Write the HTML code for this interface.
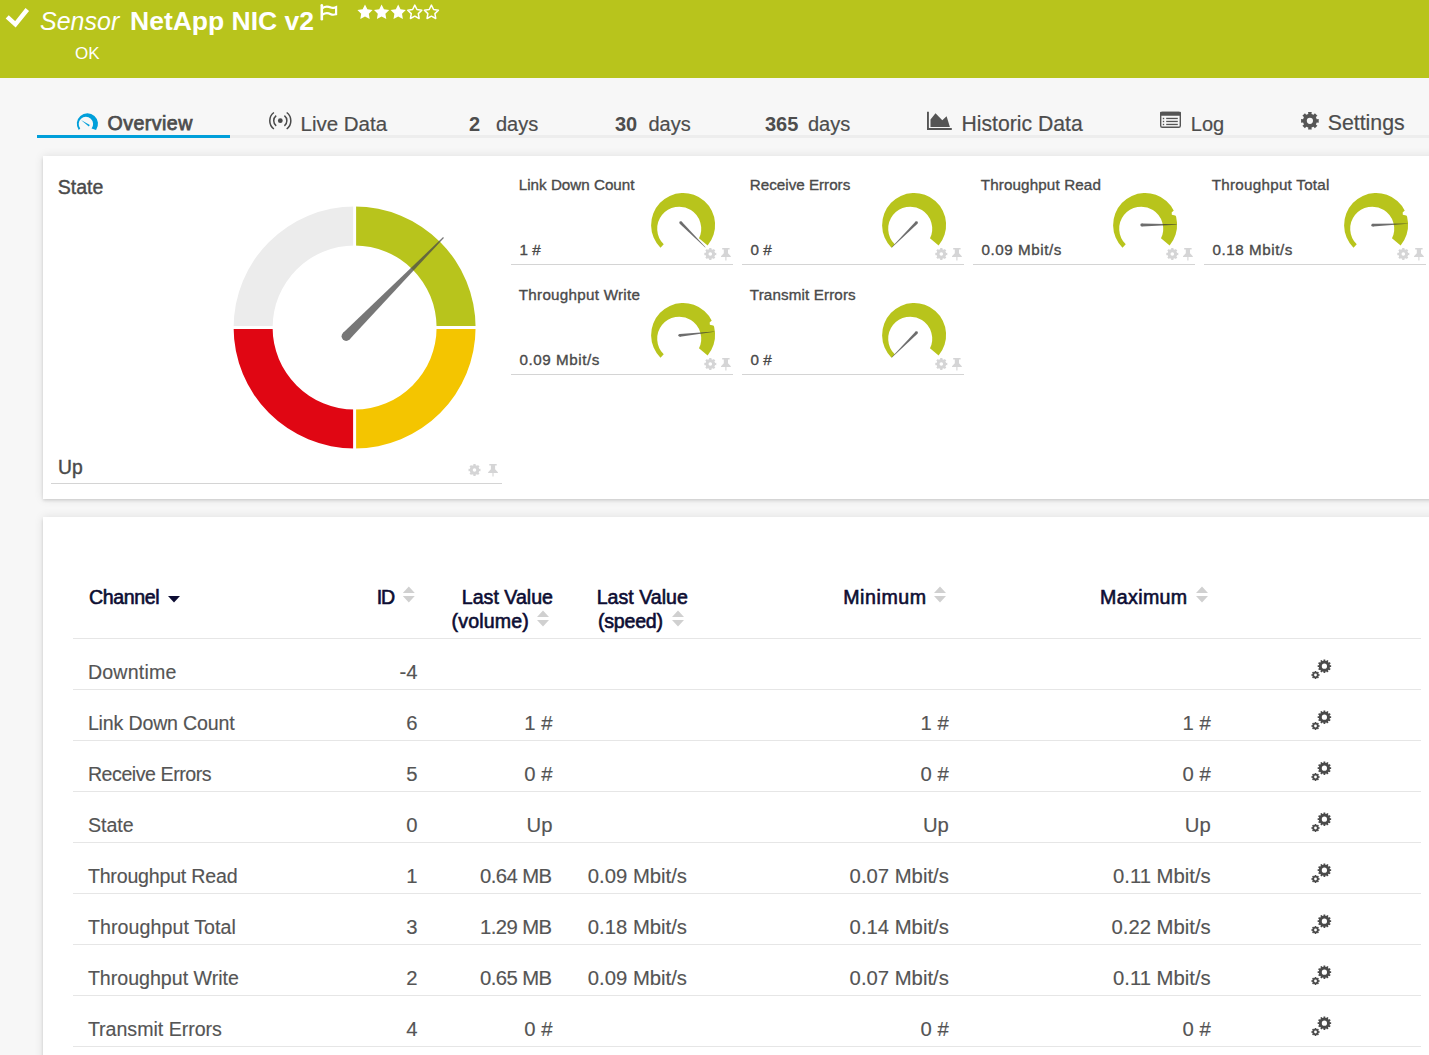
<!DOCTYPE html>
<html><head><meta charset="utf-8">
<style>
html,body{margin:0;padding:0;}
body{width:1429px;height:1055px;overflow:hidden;background:#f7f7f7;position:relative;font-family:"Liberation Sans", sans-serif;}
.t{position:absolute;white-space:nowrap;}
.abs{position:absolute;}
svg{overflow:visible;}
</style></head><body>
<div class="abs" style="left:0;top:0;width:1429px;height:78px;background:#b8c41c;"></div><svg class="abs" style="left:0;top:0" width="450" height="78"><polyline points="7.2,16.8 15.4,24.3 27.3,9.5" fill="none" stroke="#fff" stroke-width="4.5"/><path d="M321.8,5.3 V19.3" stroke="#fff" stroke-width="2.6" stroke-linecap="round" fill="none"/><path d="M322.5,8 C325.5,6 328.5,6.5 330.8,7.6 C333,8.6 334.5,7.6 336.1,7.1 V14.2 C334.5,14.7 333,15.3 330.8,14.2 C328.5,13 325.5,12.6 322.5,14.6" fill="none" stroke="#fff" stroke-width="2.2"/></svg><svg class="abs" style="left:0;top:0" width="450" height="78"><polygon points="365.00,4.50 367.35,9.26 372.61,10.03 368.80,13.74 369.70,18.97 365.00,16.50 360.30,18.97 361.20,13.74 357.39,10.03 362.65,9.26" fill="#fff"/><polygon points="381.60,4.50 383.95,9.26 389.21,10.03 385.40,13.74 386.30,18.97 381.60,16.50 376.90,18.97 377.80,13.74 373.99,10.03 379.25,9.26" fill="#fff"/><polygon points="398.20,4.50 400.55,9.26 405.81,10.03 402.00,13.74 402.90,18.97 398.20,16.50 393.50,18.97 394.40,13.74 390.59,10.03 395.85,9.26" fill="#fff"/><polygon points="414.80,5.10 416.97,9.51 421.84,10.21 418.32,13.64 419.15,18.49 414.80,16.20 410.45,18.49 411.28,13.64 407.76,10.21 412.63,9.51" fill="none" stroke="#fff" stroke-width="1.5" stroke-linejoin="round"/><polygon points="431.40,5.10 433.57,9.51 438.44,10.21 434.92,13.64 435.75,18.49 431.40,16.20 427.05,18.49 427.88,13.64 424.36,10.21 429.23,9.51" fill="none" stroke="#fff" stroke-width="1.5" stroke-linejoin="round"/></svg><div class="t" style="left:40.00px;top:8.84px;font-size:25px;line-height:25px;font-weight:normal;font-style:italic;color:#fff;">Sensor</div><div class="t" style="left:130.00px;top:7.57px;font-size:26.5px;line-height:26.5px;font-weight:bold;font-style:normal;color:#fff;">NetApp NIC v2</div><div class="t" style="left:75.00px;top:44.61px;font-size:17px;line-height:17px;font-weight:normal;font-style:normal;color:#fff;">OK</div><div class="abs" style="left:230px;top:135px;width:1199px;height:3px;background:#ededed;"></div><div class="abs" style="left:37px;top:135px;width:193px;height:3px;background:#009fda;"></div><svg class="abs" style="left:0;top:0" width="1" height="1"><path d="M78.72,129.88 A10.6,10.6 0 1 1 96.08,129.88 L91.57,128.43 A7.2,7.2 0 1 0 80.23,128.43 Z" fill="#009fda"/><path d="M81,120 L89.8,125 L88.8,126.5 Z" fill="#009fda"/></svg><div class="t" style="left:107.50px;top:114.41px;font-size:19.6px;line-height:19.6px;font-weight:normal;font-style:normal;color:#4d4d4d;-webkit-text-stroke:0.75px #4d4d4d;letter-spacing:0.45px;">Overview</div><svg class="abs" style="left:0;top:0" width="1" height="1"><circle cx="280.3" cy="120.7" r="2.4" fill="#4a4a4a"/><path d="M276.2,115.6 A6.5,6.5 0 0 0 276.2,125.8" fill="none" stroke="#4a4a4a" stroke-width="1.5"/><path d="M284.4,115.6 A6.5,6.5 0 0 1 284.4,125.8" fill="none" stroke="#4a4a4a" stroke-width="1.5"/><path d="M273.9,112.5 A10.3,10.3 0 0 0 273.9,129" fill="none" stroke="#4a4a4a" stroke-width="1.5"/><path d="M286.7,112.5 A10.3,10.3 0 0 1 286.7,129" fill="none" stroke="#4a4a4a" stroke-width="1.5"/></svg><div class="t" style="left:300.50px;top:113.65px;font-size:20.5px;line-height:20.5px;font-weight:normal;font-style:normal;color:#4d4d4d;-webkit-text-stroke:0.2px #4d4d4d;">Live Data</div><div class="t" style="left:469.00px;top:114.07px;font-size:20px;line-height:20px;font-weight:bold;font-style:normal;color:#4d4d4d;">2</div><div class="t" style="left:496.00px;top:114.07px;font-size:20px;line-height:20px;font-weight:normal;font-style:normal;color:#4d4d4d;-webkit-text-stroke:0.2px #4d4d4d;">days</div><div class="t" style="left:615.00px;top:114.07px;font-size:20px;line-height:20px;font-weight:bold;font-style:normal;color:#4d4d4d;">30</div><div class="t" style="left:648.50px;top:114.07px;font-size:20px;line-height:20px;font-weight:normal;font-style:normal;color:#4d4d4d;-webkit-text-stroke:0.2px #4d4d4d;">days</div><div class="t" style="left:765.00px;top:114.07px;font-size:20px;line-height:20px;font-weight:bold;font-style:normal;color:#4d4d4d;">365</div><div class="t" style="left:808.00px;top:114.07px;font-size:20px;line-height:20px;font-weight:normal;font-style:normal;color:#4d4d4d;-webkit-text-stroke:0.2px #4d4d4d;">days</div><svg class="abs" style="left:0;top:0" width="1" height="1"><path d="M927,111.8 H928.9 V128.1 H951.8 V130 H927 Z" fill="#555"/><path d="M930.5,126.9 V119.5 L935.5,113.3 L942.3,120.3 L946.6,116.3 L949.9,126.9 Z" fill="#555"/></svg><div class="t" style="left:961.50px;top:113.05px;font-size:21.2px;line-height:21.2px;font-weight:normal;font-style:normal;color:#4d4d4d;-webkit-text-stroke:0.2px #4d4d4d;">Historic Data</div><svg class="abs" style="left:0;top:0" width="1" height="1"><rect x="1160.7" y="112.5" width="19.6" height="14.8" rx="1.6" fill="none" stroke="#555" stroke-width="1.4"/><rect x="1160" y="111.8" width="21" height="4" rx="1" fill="#555"/><rect x="1162.8" y="117.8" width="1.4" height="1.4" fill="#555"/><rect x="1166.2" y="117.8" width="11.6" height="1.3" fill="#555"/><rect x="1162.8" y="120.8" width="1.4" height="1.4" fill="#555"/><rect x="1166.2" y="120.8" width="11.6" height="1.3" fill="#555"/><rect x="1162.8" y="123.8" width="1.4" height="1.4" fill="#555"/><rect x="1166.2" y="123.8" width="11.6" height="1.3" fill="#555"/></svg><div class="t" style="left:1190.80px;top:114.07px;font-size:20px;line-height:20px;font-weight:normal;font-style:normal;color:#4d4d4d;-webkit-text-stroke:0.2px #4d4d4d;">Log</div><svg class="abs" style="left:0;top:0" width="1" height="1"><path d="M1316.72,119.22 L1318.71,118.97 L1318.71,122.63 L1316.72,122.38 L1315.84,124.50 L1317.42,125.74 L1314.84,128.32 L1313.60,126.74 L1311.48,127.62 L1311.73,129.61 L1308.07,129.61 L1308.32,127.62 L1306.20,126.74 L1304.96,128.32 L1302.38,125.74 L1303.96,124.50 L1303.08,122.38 L1301.09,122.63 L1301.09,118.97 L1303.08,119.22 L1303.96,117.10 L1302.38,115.86 L1304.96,113.28 L1306.20,114.86 L1308.32,113.98 L1308.07,111.99 L1311.73,111.99 L1311.48,113.98 L1313.60,114.86 L1314.84,113.28 L1317.42,115.86 L1315.84,117.10 Z M1313.00,120.80 A3.1,3.1 0 1 0 1306.80,120.80 A3.1,3.1 0 1 0 1313.00,120.80 Z" fill="#555" fill-rule="evenodd"/></svg><div class="t" style="left:1327.70px;top:112.97px;font-size:21.3px;line-height:21.3px;font-weight:normal;font-style:normal;color:#4d4d4d;-webkit-text-stroke:0.2px #4d4d4d;">Settings</div><div class="abs" style="left:43px;top:156px;width:1400px;height:343px;background:#fff;box-shadow:0 1.5px 3px rgba(0,0,0,0.13), 0 0 9px rgba(0,0,0,0.10);"></div><div class="abs" style="left:43px;top:517px;width:1400px;height:600px;background:#fff;box-shadow:0 1.5px 3px rgba(0,0,0,0.13), 0 0 9px rgba(0,0,0,0.10);"></div><div class="t" style="left:57.80px;top:178.29px;font-size:19.5px;line-height:19.5px;font-weight:normal;font-style:normal;color:#4a4a4a;-webkit-text-stroke:0.4px #4a4a4a;">State</div><div class="t" style="left:58.00px;top:457.86px;font-size:19.3px;line-height:19.3px;font-weight:normal;font-style:normal;color:#4a4a4a;-webkit-text-stroke:0.4px #4a4a4a;">Up</div><div class="abs" style="left:51px;top:483px;width:451px;height:1px;background:#d4d4d4;"></div><svg class="abs" style="left:0;top:0" width="1" height="1"><path d="M233.60,327.50 A121,121 0 0 1 354.60,206.50 L354.60,245.50 A82,82 0 0 0 272.60,327.50 Z" fill="#ececec"/><path d="M354.60,206.50 A121,121 0 0 1 475.60,327.50 L436.60,327.50 A82,82 0 0 0 354.60,245.50 Z" fill="#b8c41c"/><path d="M475.60,327.50 A121,121 0 0 1 354.60,448.50 L354.60,409.50 A82,82 0 0 0 436.60,327.50 Z" fill="#f4c500"/><path d="M354.60,448.50 A121,121 0 0 1 233.60,327.50 L272.60,327.50 A82,82 0 0 0 354.60,409.50 Z" fill="#e00613"/><rect x="353.1" y="204.5" width="3" height="246" fill="#fff"/><rect x="231.60000000000002" y="326.0" width="246" height="3" fill="#fff"/><g opacity="0.75"><path d="M349.48,339.53 L443.89,237.89 L443.11,237.11 L342.92,333.07 Z" fill="#4a4a4a"/><circle cx="346.20" cy="336.30" r="4.60" fill="#4a4a4a"/></g><path d="M479.28,468.93 L480.48,468.81 L480.48,471.19 L479.28,471.07 L478.64,472.63 L479.57,473.39 L477.89,475.07 L477.13,474.14 L475.57,474.78 L475.69,475.98 L473.31,475.98 L473.43,474.78 L471.87,474.14 L471.11,475.07 L469.43,473.39 L470.36,472.63 L469.72,471.07 L468.52,471.19 L468.52,468.81 L469.72,468.93 L470.36,467.37 L469.43,466.61 L471.11,464.93 L471.87,465.86 L473.43,465.22 L473.31,464.02 L475.69,464.02 L475.57,465.22 L477.13,465.86 L477.89,464.93 L479.57,466.61 L478.64,467.37 Z M476.30,470.00 A1.8,1.8 0 1 0 472.70,470.00 A1.8,1.8 0 1 0 476.30,470.00 Z" fill="#d5d5d6" fill-rule="evenodd"/><path d="M489.30,464.00 H496.70 V465.50 H495.10 V469.20 L497.90,472.20 V473.00 H493.55 V476.60 H492.45 V473.00 H488.10 V472.20 L490.90,469.20 V465.50 H489.30 Z" fill="#d5d5d6"/></svg><div class="t" style="left:518.80px;top:177.13px;font-size:15.2px;line-height:15.2px;font-weight:normal;font-style:normal;color:#4a4a4a;-webkit-text-stroke:0.35px #4a4a4a;letter-spacing:0px;">Link Down Count</div><div class="t" style="left:519.50px;top:242.13px;font-size:15.2px;line-height:15.2px;font-weight:normal;font-style:normal;color:#4a4a4a;-webkit-text-stroke:0.35px #4a4a4a;letter-spacing:0px;">1 #</div><div class="abs" style="left:511px;top:264px;width:222px;height:1px;background:#d4d4d4;"></div><svg class="abs" style="left:0;top:0" width="1" height="1"><path d="M660.47,247.63 A32,32 0 1 1 707.61,245.57 L698.98,238.33 A22,22 0 1 0 663.74,244.36 Z" fill="#b8c41c"/><g opacity="0.71"><path d="M679.74,223.69 L705.23,247.42 L705.52,247.13 L681.79,221.64 Z" fill="#333333"/><circle cx="680.77" cy="222.67" r="1.45" fill="#333333"/></g><path d="M715.08,252.93 L716.28,252.81 L716.28,255.19 L715.08,255.07 L714.44,256.63 L715.37,257.39 L713.69,259.07 L712.93,258.14 L711.37,258.78 L711.49,259.98 L709.11,259.98 L709.23,258.78 L707.67,258.14 L706.91,259.07 L705.23,257.39 L706.16,256.63 L705.52,255.07 L704.32,255.19 L704.32,252.81 L705.52,252.93 L706.16,251.37 L705.23,250.61 L706.91,248.93 L707.67,249.86 L709.23,249.22 L709.11,248.02 L711.49,248.02 L711.37,249.22 L712.93,249.86 L713.69,248.93 L715.37,250.61 L714.44,251.37 Z M712.10,254.00 A1.8,1.8 0 1 0 708.50,254.00 A1.8,1.8 0 1 0 712.10,254.00 Z" fill="#d5d5d6" fill-rule="evenodd"/><path d="M722.20,248.00 H729.60 V249.50 H728.00 V253.20 L730.80,256.20 V257.00 H726.45 V260.60 H725.35 V257.00 H721.00 V256.20 L723.80,253.20 V249.50 H722.20 Z" fill="#d5d5d6"/></svg><div class="t" style="left:749.80px;top:177.13px;font-size:15.2px;line-height:15.2px;font-weight:normal;font-style:normal;color:#4a4a4a;-webkit-text-stroke:0.35px #4a4a4a;letter-spacing:0px;">Receive Errors</div><div class="t" style="left:750.50px;top:242.13px;font-size:15.2px;line-height:15.2px;font-weight:normal;font-style:normal;color:#4a4a4a;-webkit-text-stroke:0.35px #4a4a4a;letter-spacing:0px;">0 #</div><div class="abs" style="left:742px;top:264px;width:222px;height:1px;background:#d4d4d4;"></div><svg class="abs" style="left:0;top:0" width="1" height="1"><path d="M891.47,247.63 A32,32 0 1 1 938.61,245.57 L929.98,238.33 A22,22 0 1 0 894.74,244.36 Z" fill="#b8c41c"/><g opacity="0.71"><path d="M915.41,221.64 L891.68,247.13 L891.97,247.42 L917.46,223.69 Z" fill="#333333"/><circle cx="916.43" cy="222.67" r="1.45" fill="#333333"/></g><path d="M946.08,252.93 L947.28,252.81 L947.28,255.19 L946.08,255.07 L945.44,256.63 L946.37,257.39 L944.69,259.07 L943.93,258.14 L942.37,258.78 L942.49,259.98 L940.11,259.98 L940.23,258.78 L938.67,258.14 L937.91,259.07 L936.23,257.39 L937.16,256.63 L936.52,255.07 L935.32,255.19 L935.32,252.81 L936.52,252.93 L937.16,251.37 L936.23,250.61 L937.91,248.93 L938.67,249.86 L940.23,249.22 L940.11,248.02 L942.49,248.02 L942.37,249.22 L943.93,249.86 L944.69,248.93 L946.37,250.61 L945.44,251.37 Z M943.10,254.00 A1.8,1.8 0 1 0 939.50,254.00 A1.8,1.8 0 1 0 943.10,254.00 Z" fill="#d5d5d6" fill-rule="evenodd"/><path d="M953.20,248.00 H960.60 V249.50 H959.00 V253.20 L961.80,256.20 V257.00 H957.45 V260.60 H956.35 V257.00 H952.00 V256.20 L954.80,253.20 V249.50 H953.20 Z" fill="#d5d5d6"/></svg><div class="t" style="left:980.80px;top:177.13px;font-size:15.2px;line-height:15.2px;font-weight:normal;font-style:normal;color:#4a4a4a;-webkit-text-stroke:0.35px #4a4a4a;letter-spacing:0.13px;">Throughput Read</div><div class="t" style="left:981.50px;top:242.13px;font-size:15.2px;line-height:15.2px;font-weight:normal;font-style:normal;color:#4a4a4a;-webkit-text-stroke:0.35px #4a4a4a;letter-spacing:0.55px;">0.09 Mbit/s</div><div class="abs" style="left:973px;top:264px;width:222px;height:1px;background:#d4d4d4;"></div><svg class="abs" style="left:0;top:0" width="1" height="1"><path d="M1122.47,247.63 A32,32 0 1 1 1169.61,245.57 L1160.98,238.33 A22,22 0 1 0 1125.74,244.36 Z" fill="#b8c41c"/><path d="M1174.95,209.79 L1171.73,212.30 L1171.80,214.75 L1177.38,216.05 Z" fill="#fff"/><g opacity="0.71"><path d="M1141.83,226.51 L1176.60,224.65 L1176.59,224.25 L1141.78,223.61 Z" fill="#333333"/><circle cx="1141.80" cy="225.06" r="1.45" fill="#333333"/></g><path d="M1177.08,252.93 L1178.28,252.81 L1178.28,255.19 L1177.08,255.07 L1176.44,256.63 L1177.37,257.39 L1175.69,259.07 L1174.93,258.14 L1173.37,258.78 L1173.49,259.98 L1171.11,259.98 L1171.23,258.78 L1169.67,258.14 L1168.91,259.07 L1167.23,257.39 L1168.16,256.63 L1167.52,255.07 L1166.32,255.19 L1166.32,252.81 L1167.52,252.93 L1168.16,251.37 L1167.23,250.61 L1168.91,248.93 L1169.67,249.86 L1171.23,249.22 L1171.11,248.02 L1173.49,248.02 L1173.37,249.22 L1174.93,249.86 L1175.69,248.93 L1177.37,250.61 L1176.44,251.37 Z M1174.10,254.00 A1.8,1.8 0 1 0 1170.50,254.00 A1.8,1.8 0 1 0 1174.10,254.00 Z" fill="#d5d5d6" fill-rule="evenodd"/><path d="M1184.20,248.00 H1191.60 V249.50 H1190.00 V253.20 L1192.80,256.20 V257.00 H1188.45 V260.60 H1187.35 V257.00 H1183.00 V256.20 L1185.80,253.20 V249.50 H1184.20 Z" fill="#d5d5d6"/></svg><div class="t" style="left:1211.80px;top:177.13px;font-size:15.2px;line-height:15.2px;font-weight:normal;font-style:normal;color:#4a4a4a;-webkit-text-stroke:0.35px #4a4a4a;letter-spacing:0.26px;">Throughput Total</div><div class="t" style="left:1212.50px;top:242.13px;font-size:15.2px;line-height:15.2px;font-weight:normal;font-style:normal;color:#4a4a4a;-webkit-text-stroke:0.35px #4a4a4a;letter-spacing:0.55px;">0.18 Mbit/s</div><div class="abs" style="left:1204px;top:264px;width:222px;height:1px;background:#d4d4d4;"></div><svg class="abs" style="left:0;top:0" width="1" height="1"><path d="M1353.47,247.63 A32,32 0 1 1 1400.61,245.57 L1391.98,238.33 A22,22 0 1 0 1356.74,244.36 Z" fill="#b8c41c"/><path d="M1405.95,209.79 L1402.73,212.30 L1402.80,214.75 L1408.38,216.05 Z" fill="#fff"/><g opacity="0.71"><path d="M1372.87,226.59 L1407.58,223.83 L1407.56,223.43 L1372.74,223.70 Z" fill="#333333"/><circle cx="1372.80" cy="225.14" r="1.45" fill="#333333"/></g><path d="M1408.08,252.93 L1409.28,252.81 L1409.28,255.19 L1408.08,255.07 L1407.44,256.63 L1408.37,257.39 L1406.69,259.07 L1405.93,258.14 L1404.37,258.78 L1404.49,259.98 L1402.11,259.98 L1402.23,258.78 L1400.67,258.14 L1399.91,259.07 L1398.23,257.39 L1399.16,256.63 L1398.52,255.07 L1397.32,255.19 L1397.32,252.81 L1398.52,252.93 L1399.16,251.37 L1398.23,250.61 L1399.91,248.93 L1400.67,249.86 L1402.23,249.22 L1402.11,248.02 L1404.49,248.02 L1404.37,249.22 L1405.93,249.86 L1406.69,248.93 L1408.37,250.61 L1407.44,251.37 Z M1405.10,254.00 A1.8,1.8 0 1 0 1401.50,254.00 A1.8,1.8 0 1 0 1405.10,254.00 Z" fill="#d5d5d6" fill-rule="evenodd"/><path d="M1415.20,248.00 H1422.60 V249.50 H1421.00 V253.20 L1423.80,256.20 V257.00 H1419.45 V260.60 H1418.35 V257.00 H1414.00 V256.20 L1416.80,253.20 V249.50 H1415.20 Z" fill="#d5d5d6"/></svg><div class="t" style="left:518.80px;top:287.13px;font-size:15.2px;line-height:15.2px;font-weight:normal;font-style:normal;color:#4a4a4a;-webkit-text-stroke:0.35px #4a4a4a;letter-spacing:0.27px;">Throughput Write</div><div class="t" style="left:519.50px;top:352.13px;font-size:15.2px;line-height:15.2px;font-weight:normal;font-style:normal;color:#4a4a4a;-webkit-text-stroke:0.35px #4a4a4a;letter-spacing:0.55px;">0.09 Mbit/s</div><div class="abs" style="left:511px;top:374px;width:222px;height:1px;background:#d4d4d4;"></div><svg class="abs" style="left:0;top:0" width="1" height="1"><path d="M660.47,357.63 A32,32 0 1 1 707.61,355.57 L698.98,348.33 A22,22 0 1 0 663.74,354.36 Z" fill="#b8c41c"/><path d="M712.95,319.79 L709.73,322.30 L709.80,324.75 L715.38,326.05 Z" fill="#fff"/><g opacity="0.71"><path d="M679.98,336.80 L714.44,331.80 L714.39,331.40 L679.66,333.91 Z" fill="#333333"/><circle cx="679.82" cy="335.36" r="1.45" fill="#333333"/></g><path d="M715.08,362.93 L716.28,362.81 L716.28,365.19 L715.08,365.07 L714.44,366.63 L715.37,367.39 L713.69,369.07 L712.93,368.14 L711.37,368.78 L711.49,369.98 L709.11,369.98 L709.23,368.78 L707.67,368.14 L706.91,369.07 L705.23,367.39 L706.16,366.63 L705.52,365.07 L704.32,365.19 L704.32,362.81 L705.52,362.93 L706.16,361.37 L705.23,360.61 L706.91,358.93 L707.67,359.86 L709.23,359.22 L709.11,358.02 L711.49,358.02 L711.37,359.22 L712.93,359.86 L713.69,358.93 L715.37,360.61 L714.44,361.37 Z M712.10,364.00 A1.8,1.8 0 1 0 708.50,364.00 A1.8,1.8 0 1 0 712.10,364.00 Z" fill="#d5d5d6" fill-rule="evenodd"/><path d="M722.20,358.00 H729.60 V359.50 H728.00 V363.20 L730.80,366.20 V367.00 H726.45 V370.60 H725.35 V367.00 H721.00 V366.20 L723.80,363.20 V359.50 H722.20 Z" fill="#d5d5d6"/></svg><div class="t" style="left:749.80px;top:287.13px;font-size:15.2px;line-height:15.2px;font-weight:normal;font-style:normal;color:#4a4a4a;-webkit-text-stroke:0.35px #4a4a4a;letter-spacing:0.13px;">Transmit Errors</div><div class="t" style="left:750.50px;top:352.13px;font-size:15.2px;line-height:15.2px;font-weight:normal;font-style:normal;color:#4a4a4a;-webkit-text-stroke:0.35px #4a4a4a;letter-spacing:0px;">0 #</div><div class="abs" style="left:742px;top:374px;width:222px;height:1px;background:#d4d4d4;"></div><svg class="abs" style="left:0;top:0" width="1" height="1"><path d="M891.47,357.63 A32,32 0 1 1 938.61,355.57 L929.98,348.33 A22,22 0 1 0 894.74,354.36 Z" fill="#b8c41c"/><g opacity="0.71"><path d="M915.41,331.64 L891.68,357.13 L891.97,357.42 L917.46,333.69 Z" fill="#333333"/><circle cx="916.43" cy="332.67" r="1.45" fill="#333333"/></g><path d="M946.08,362.93 L947.28,362.81 L947.28,365.19 L946.08,365.07 L945.44,366.63 L946.37,367.39 L944.69,369.07 L943.93,368.14 L942.37,368.78 L942.49,369.98 L940.11,369.98 L940.23,368.78 L938.67,368.14 L937.91,369.07 L936.23,367.39 L937.16,366.63 L936.52,365.07 L935.32,365.19 L935.32,362.81 L936.52,362.93 L937.16,361.37 L936.23,360.61 L937.91,358.93 L938.67,359.86 L940.23,359.22 L940.11,358.02 L942.49,358.02 L942.37,359.22 L943.93,359.86 L944.69,358.93 L946.37,360.61 L945.44,361.37 Z M943.10,364.00 A1.8,1.8 0 1 0 939.50,364.00 A1.8,1.8 0 1 0 943.10,364.00 Z" fill="#d5d5d6" fill-rule="evenodd"/><path d="M953.20,358.00 H960.60 V359.50 H959.00 V363.20 L961.80,366.20 V367.00 H957.45 V370.60 H956.35 V367.00 H952.00 V366.20 L954.80,363.20 V359.50 H953.20 Z" fill="#d5d5d6"/></svg><div class="t" style="left:88.90px;top:588.01px;font-size:19.6px;line-height:19.6px;font-weight:normal;font-style:normal;color:#0d0d33;-webkit-text-stroke:0.6px #0d0d33;letter-spacing:-0.4px;">Channel</div><svg class="abs" style="left:0;top:0" width="1" height="1"><path d="M168,596 L180,596 L174,602.5 Z" fill="#0d0d33"/><path d="M402.80,593.00 L408.80,586.50 L414.80,593.00 Z M402.80,596.00 L414.80,596.00 L408.80,602.50 Z" fill="#d0d0d0"/><path d="M537.00,617.00 L543.00,610.50 L549.00,617.00 Z M537.00,620.00 L549.00,620.00 L543.00,626.50 Z" fill="#d0d0d0"/><path d="M672.00,617.00 L678.00,610.50 L684.00,617.00 Z M672.00,620.00 L684.00,620.00 L678.00,626.50 Z" fill="#d0d0d0"/><path d="M934.00,593.00 L940.00,586.50 L946.00,593.00 Z M934.00,596.00 L946.00,596.00 L940.00,602.50 Z" fill="#d0d0d0"/><path d="M1196.00,593.00 L1202.00,586.50 L1208.00,593.00 Z M1196.00,596.00 L1208.00,596.00 L1202.00,602.50 Z" fill="#d0d0d0"/></svg><div class="t" style="left:376.70px;top:588.01px;font-size:19.6px;line-height:19.6px;font-weight:normal;font-style:normal;color:#0d0d33;-webkit-text-stroke:0.6px #0d0d33;letter-spacing:-1.2px;">ID</div><div class="t" style="left:461.80px;top:588.01px;font-size:19.6px;line-height:19.6px;font-weight:normal;font-style:normal;color:#0d0d33;-webkit-text-stroke:0.6px #0d0d33;">Last Value</div><div class="t" style="left:451.60px;top:611.61px;font-size:19.6px;line-height:19.6px;font-weight:normal;font-style:normal;color:#0d0d33;-webkit-text-stroke:0.6px #0d0d33;letter-spacing:0.15px;">(volume)</div><div class="t" style="left:596.70px;top:588.01px;font-size:19.6px;line-height:19.6px;font-weight:normal;font-style:normal;color:#0d0d33;-webkit-text-stroke:0.6px #0d0d33;">Last Value</div><div class="t" style="left:598.00px;top:611.61px;font-size:19.6px;line-height:19.6px;font-weight:normal;font-style:normal;color:#0d0d33;-webkit-text-stroke:0.6px #0d0d33;letter-spacing:-0.23px;">(speed)</div><div class="t" style="left:843.20px;top:588.01px;font-size:19.6px;line-height:19.6px;font-weight:normal;font-style:normal;color:#0d0d33;-webkit-text-stroke:0.6px #0d0d33;letter-spacing:0.58px;">Minimum</div><div class="t" style="left:1100.00px;top:588.01px;font-size:19.6px;line-height:19.6px;font-weight:normal;font-style:normal;color:#0d0d33;-webkit-text-stroke:0.6px #0d0d33;letter-spacing:0.38px;">Maximum</div><div class="abs" style="left:73px;top:638px;width:1348px;height:1px;background:#e6e6e6;"></div><div class="t" style="left:87.90px;top:662.81px;font-size:19.6px;line-height:19.6px;font-weight:normal;font-style:normal;color:#555555;letter-spacing:0.21px;-webkit-text-stroke:0.15px #505050;">Downtime</div><div class="t" style="right:1011.50px;top:662.22px;font-size:20.3px;line-height:20.3px;font-weight:normal;color:#555555;text-align:right;-webkit-text-stroke:0.15px #505050;">-4</div><div class="abs" style="left:73px;top:689px;width:1348px;height:1px;background:#e6e6e6;"></div><svg class="abs" style="left:0;top:0" width="1" height="1"><path d="M1329.94,665.35 L1331.14,665.31 L1331.14,667.09 L1329.94,667.05 L1329.62,668.23 L1330.68,668.80 L1329.79,670.34 L1328.77,669.70 L1327.90,670.57 L1328.54,671.59 L1327.00,672.48 L1326.43,671.42 L1325.25,671.74 L1325.29,672.94 L1323.51,672.94 L1323.55,671.74 L1322.37,671.42 L1321.80,672.48 L1320.26,671.59 L1320.90,670.57 L1320.03,669.70 L1319.01,670.34 L1318.12,668.80 L1319.18,668.23 L1318.86,667.05 L1317.66,667.09 L1317.66,665.31 L1318.86,665.35 L1319.18,664.17 L1318.12,663.60 L1319.01,662.06 L1320.03,662.70 L1320.90,661.83 L1320.26,660.81 L1321.80,659.92 L1322.37,660.98 L1323.55,660.66 L1323.51,659.46 L1325.29,659.46 L1325.25,660.66 L1326.43,660.98 L1327.00,659.92 L1328.54,660.81 L1327.90,661.83 L1328.77,662.70 L1329.79,662.06 L1330.68,663.60 L1329.62,664.17 Z M1327.00,666.20 A2.6,2.6 0 1 0 1321.80,666.20 A2.6,2.6 0 1 0 1327.00,666.20 Z" fill="#4a4a4a" fill-rule="evenodd"/><path d="M1318.71,674.25 L1319.62,674.18 L1319.62,675.82 L1318.71,675.75 L1318.30,676.75 L1318.99,677.33 L1317.83,678.49 L1317.25,677.80 L1316.25,678.21 L1316.32,679.12 L1314.68,679.12 L1314.75,678.21 L1313.75,677.80 L1313.17,678.49 L1312.01,677.33 L1312.70,676.75 L1312.29,675.75 L1311.38,675.82 L1311.38,674.18 L1312.29,674.25 L1312.70,673.25 L1312.01,672.67 L1313.17,671.51 L1313.75,672.20 L1314.75,671.79 L1314.68,670.88 L1316.32,670.88 L1316.25,671.79 L1317.25,672.20 L1317.83,671.51 L1318.99,672.67 L1318.30,673.25 Z M1316.90,675.00 A1.4,1.4 0 1 0 1314.10,675.00 A1.4,1.4 0 1 0 1316.90,675.00 Z" fill="#4a4a4a" fill-rule="evenodd"/></svg><div class="t" style="left:87.90px;top:713.81px;font-size:19.6px;line-height:19.6px;font-weight:normal;font-style:normal;color:#555555;letter-spacing:-0.17px;-webkit-text-stroke:0.15px #505050;">Link Down Count</div><div class="t" style="right:1011.50px;top:713.22px;font-size:20.3px;line-height:20.3px;font-weight:normal;color:#555555;text-align:right;-webkit-text-stroke:0.15px #505050;">6</div><div class="t" style="right:876.50px;top:713.22px;font-size:20.3px;line-height:20.3px;font-weight:normal;color:#555555;text-align:right;-webkit-text-stroke:0.15px #505050;">1 #</div><div class="t" style="right:480.20px;top:713.22px;font-size:20.3px;line-height:20.3px;font-weight:normal;color:#555555;text-align:right;-webkit-text-stroke:0.15px #505050;">1 #</div><div class="t" style="right:218.30px;top:713.22px;font-size:20.3px;line-height:20.3px;font-weight:normal;color:#555555;text-align:right;-webkit-text-stroke:0.15px #505050;">1 #</div><div class="abs" style="left:73px;top:740px;width:1348px;height:1px;background:#e6e6e6;"></div><svg class="abs" style="left:0;top:0" width="1" height="1"><path d="M1329.94,716.35 L1331.14,716.31 L1331.14,718.09 L1329.94,718.05 L1329.62,719.23 L1330.68,719.80 L1329.79,721.34 L1328.77,720.70 L1327.90,721.57 L1328.54,722.59 L1327.00,723.48 L1326.43,722.42 L1325.25,722.74 L1325.29,723.94 L1323.51,723.94 L1323.55,722.74 L1322.37,722.42 L1321.80,723.48 L1320.26,722.59 L1320.90,721.57 L1320.03,720.70 L1319.01,721.34 L1318.12,719.80 L1319.18,719.23 L1318.86,718.05 L1317.66,718.09 L1317.66,716.31 L1318.86,716.35 L1319.18,715.17 L1318.12,714.60 L1319.01,713.06 L1320.03,713.70 L1320.90,712.83 L1320.26,711.81 L1321.80,710.92 L1322.37,711.98 L1323.55,711.66 L1323.51,710.46 L1325.29,710.46 L1325.25,711.66 L1326.43,711.98 L1327.00,710.92 L1328.54,711.81 L1327.90,712.83 L1328.77,713.70 L1329.79,713.06 L1330.68,714.60 L1329.62,715.17 Z M1327.00,717.20 A2.6,2.6 0 1 0 1321.80,717.20 A2.6,2.6 0 1 0 1327.00,717.20 Z" fill="#4a4a4a" fill-rule="evenodd"/><path d="M1318.71,725.25 L1319.62,725.18 L1319.62,726.82 L1318.71,726.75 L1318.30,727.75 L1318.99,728.33 L1317.83,729.49 L1317.25,728.80 L1316.25,729.21 L1316.32,730.12 L1314.68,730.12 L1314.75,729.21 L1313.75,728.80 L1313.17,729.49 L1312.01,728.33 L1312.70,727.75 L1312.29,726.75 L1311.38,726.82 L1311.38,725.18 L1312.29,725.25 L1312.70,724.25 L1312.01,723.67 L1313.17,722.51 L1313.75,723.20 L1314.75,722.79 L1314.68,721.88 L1316.32,721.88 L1316.25,722.79 L1317.25,723.20 L1317.83,722.51 L1318.99,723.67 L1318.30,724.25 Z M1316.90,726.00 A1.4,1.4 0 1 0 1314.10,726.00 A1.4,1.4 0 1 0 1316.90,726.00 Z" fill="#4a4a4a" fill-rule="evenodd"/></svg><div class="t" style="left:87.90px;top:764.81px;font-size:19.6px;line-height:19.6px;font-weight:normal;font-style:normal;color:#555555;letter-spacing:-0.45px;-webkit-text-stroke:0.15px #505050;">Receive Errors</div><div class="t" style="right:1011.50px;top:764.22px;font-size:20.3px;line-height:20.3px;font-weight:normal;color:#555555;text-align:right;-webkit-text-stroke:0.15px #505050;">5</div><div class="t" style="right:876.50px;top:764.22px;font-size:20.3px;line-height:20.3px;font-weight:normal;color:#555555;text-align:right;-webkit-text-stroke:0.15px #505050;">0 #</div><div class="t" style="right:480.20px;top:764.22px;font-size:20.3px;line-height:20.3px;font-weight:normal;color:#555555;text-align:right;-webkit-text-stroke:0.15px #505050;">0 #</div><div class="t" style="right:218.30px;top:764.22px;font-size:20.3px;line-height:20.3px;font-weight:normal;color:#555555;text-align:right;-webkit-text-stroke:0.15px #505050;">0 #</div><div class="abs" style="left:73px;top:791px;width:1348px;height:1px;background:#e6e6e6;"></div><svg class="abs" style="left:0;top:0" width="1" height="1"><path d="M1329.94,767.35 L1331.14,767.31 L1331.14,769.09 L1329.94,769.05 L1329.62,770.23 L1330.68,770.80 L1329.79,772.34 L1328.77,771.70 L1327.90,772.57 L1328.54,773.59 L1327.00,774.48 L1326.43,773.42 L1325.25,773.74 L1325.29,774.94 L1323.51,774.94 L1323.55,773.74 L1322.37,773.42 L1321.80,774.48 L1320.26,773.59 L1320.90,772.57 L1320.03,771.70 L1319.01,772.34 L1318.12,770.80 L1319.18,770.23 L1318.86,769.05 L1317.66,769.09 L1317.66,767.31 L1318.86,767.35 L1319.18,766.17 L1318.12,765.60 L1319.01,764.06 L1320.03,764.70 L1320.90,763.83 L1320.26,762.81 L1321.80,761.92 L1322.37,762.98 L1323.55,762.66 L1323.51,761.46 L1325.29,761.46 L1325.25,762.66 L1326.43,762.98 L1327.00,761.92 L1328.54,762.81 L1327.90,763.83 L1328.77,764.70 L1329.79,764.06 L1330.68,765.60 L1329.62,766.17 Z M1327.00,768.20 A2.6,2.6 0 1 0 1321.80,768.20 A2.6,2.6 0 1 0 1327.00,768.20 Z" fill="#4a4a4a" fill-rule="evenodd"/><path d="M1318.71,776.25 L1319.62,776.18 L1319.62,777.82 L1318.71,777.75 L1318.30,778.75 L1318.99,779.33 L1317.83,780.49 L1317.25,779.80 L1316.25,780.21 L1316.32,781.12 L1314.68,781.12 L1314.75,780.21 L1313.75,779.80 L1313.17,780.49 L1312.01,779.33 L1312.70,778.75 L1312.29,777.75 L1311.38,777.82 L1311.38,776.18 L1312.29,776.25 L1312.70,775.25 L1312.01,774.67 L1313.17,773.51 L1313.75,774.20 L1314.75,773.79 L1314.68,772.88 L1316.32,772.88 L1316.25,773.79 L1317.25,774.20 L1317.83,773.51 L1318.99,774.67 L1318.30,775.25 Z M1316.90,777.00 A1.4,1.4 0 1 0 1314.10,777.00 A1.4,1.4 0 1 0 1316.90,777.00 Z" fill="#4a4a4a" fill-rule="evenodd"/></svg><div class="t" style="left:87.90px;top:815.81px;font-size:19.6px;line-height:19.6px;font-weight:normal;font-style:normal;color:#555555;letter-spacing:0px;-webkit-text-stroke:0.15px #505050;">State</div><div class="t" style="right:1011.50px;top:815.22px;font-size:20.3px;line-height:20.3px;font-weight:normal;color:#555555;text-align:right;-webkit-text-stroke:0.15px #505050;">0</div><div class="t" style="right:876.50px;top:815.22px;font-size:20.3px;line-height:20.3px;font-weight:normal;color:#555555;text-align:right;-webkit-text-stroke:0.15px #505050;">Up</div><div class="t" style="right:480.20px;top:815.22px;font-size:20.3px;line-height:20.3px;font-weight:normal;color:#555555;text-align:right;-webkit-text-stroke:0.15px #505050;">Up</div><div class="t" style="right:218.30px;top:815.22px;font-size:20.3px;line-height:20.3px;font-weight:normal;color:#555555;text-align:right;-webkit-text-stroke:0.15px #505050;">Up</div><div class="abs" style="left:73px;top:842px;width:1348px;height:1px;background:#e6e6e6;"></div><svg class="abs" style="left:0;top:0" width="1" height="1"><path d="M1329.94,818.35 L1331.14,818.31 L1331.14,820.09 L1329.94,820.05 L1329.62,821.23 L1330.68,821.80 L1329.79,823.34 L1328.77,822.70 L1327.90,823.57 L1328.54,824.59 L1327.00,825.48 L1326.43,824.42 L1325.25,824.74 L1325.29,825.94 L1323.51,825.94 L1323.55,824.74 L1322.37,824.42 L1321.80,825.48 L1320.26,824.59 L1320.90,823.57 L1320.03,822.70 L1319.01,823.34 L1318.12,821.80 L1319.18,821.23 L1318.86,820.05 L1317.66,820.09 L1317.66,818.31 L1318.86,818.35 L1319.18,817.17 L1318.12,816.60 L1319.01,815.06 L1320.03,815.70 L1320.90,814.83 L1320.26,813.81 L1321.80,812.92 L1322.37,813.98 L1323.55,813.66 L1323.51,812.46 L1325.29,812.46 L1325.25,813.66 L1326.43,813.98 L1327.00,812.92 L1328.54,813.81 L1327.90,814.83 L1328.77,815.70 L1329.79,815.06 L1330.68,816.60 L1329.62,817.17 Z M1327.00,819.20 A2.6,2.6 0 1 0 1321.80,819.20 A2.6,2.6 0 1 0 1327.00,819.20 Z" fill="#4a4a4a" fill-rule="evenodd"/><path d="M1318.71,827.25 L1319.62,827.18 L1319.62,828.82 L1318.71,828.75 L1318.30,829.75 L1318.99,830.33 L1317.83,831.49 L1317.25,830.80 L1316.25,831.21 L1316.32,832.12 L1314.68,832.12 L1314.75,831.21 L1313.75,830.80 L1313.17,831.49 L1312.01,830.33 L1312.70,829.75 L1312.29,828.75 L1311.38,828.82 L1311.38,827.18 L1312.29,827.25 L1312.70,826.25 L1312.01,825.67 L1313.17,824.51 L1313.75,825.20 L1314.75,824.79 L1314.68,823.88 L1316.32,823.88 L1316.25,824.79 L1317.25,825.20 L1317.83,824.51 L1318.99,825.67 L1318.30,826.25 Z M1316.90,828.00 A1.4,1.4 0 1 0 1314.10,828.00 A1.4,1.4 0 1 0 1316.90,828.00 Z" fill="#4a4a4a" fill-rule="evenodd"/></svg><div class="t" style="left:87.90px;top:866.81px;font-size:19.6px;line-height:19.6px;font-weight:normal;font-style:normal;color:#555555;letter-spacing:-0.2px;-webkit-text-stroke:0.15px #505050;">Throughput Read</div><div class="t" style="right:1011.50px;top:866.22px;font-size:20.3px;line-height:20.3px;font-weight:normal;color:#555555;text-align:right;-webkit-text-stroke:0.15px #505050;">1</div><div class="t" style="right:877.40px;top:866.22px;font-size:20.3px;line-height:20.3px;font-weight:normal;color:#555555;text-align:right;-webkit-text-stroke:0.15px #505050;letter-spacing:-0.55px;">0.64 MB</div><div class="t" style="right:742.00px;top:866.22px;font-size:20.3px;line-height:20.3px;font-weight:normal;color:#555555;text-align:right;-webkit-text-stroke:0.15px #505050;">0.09 Mbit/s</div><div class="t" style="right:480.20px;top:866.22px;font-size:20.3px;line-height:20.3px;font-weight:normal;color:#555555;text-align:right;-webkit-text-stroke:0.15px #505050;">0.07 Mbit/s</div><div class="t" style="right:218.30px;top:866.22px;font-size:20.3px;line-height:20.3px;font-weight:normal;color:#555555;text-align:right;-webkit-text-stroke:0.15px #505050;">0.11 Mbit/s</div><div class="abs" style="left:73px;top:893px;width:1348px;height:1px;background:#e6e6e6;"></div><svg class="abs" style="left:0;top:0" width="1" height="1"><path d="M1329.94,869.35 L1331.14,869.31 L1331.14,871.09 L1329.94,871.05 L1329.62,872.23 L1330.68,872.80 L1329.79,874.34 L1328.77,873.70 L1327.90,874.57 L1328.54,875.59 L1327.00,876.48 L1326.43,875.42 L1325.25,875.74 L1325.29,876.94 L1323.51,876.94 L1323.55,875.74 L1322.37,875.42 L1321.80,876.48 L1320.26,875.59 L1320.90,874.57 L1320.03,873.70 L1319.01,874.34 L1318.12,872.80 L1319.18,872.23 L1318.86,871.05 L1317.66,871.09 L1317.66,869.31 L1318.86,869.35 L1319.18,868.17 L1318.12,867.60 L1319.01,866.06 L1320.03,866.70 L1320.90,865.83 L1320.26,864.81 L1321.80,863.92 L1322.37,864.98 L1323.55,864.66 L1323.51,863.46 L1325.29,863.46 L1325.25,864.66 L1326.43,864.98 L1327.00,863.92 L1328.54,864.81 L1327.90,865.83 L1328.77,866.70 L1329.79,866.06 L1330.68,867.60 L1329.62,868.17 Z M1327.00,870.20 A2.6,2.6 0 1 0 1321.80,870.20 A2.6,2.6 0 1 0 1327.00,870.20 Z" fill="#4a4a4a" fill-rule="evenodd"/><path d="M1318.71,878.25 L1319.62,878.18 L1319.62,879.82 L1318.71,879.75 L1318.30,880.75 L1318.99,881.33 L1317.83,882.49 L1317.25,881.80 L1316.25,882.21 L1316.32,883.12 L1314.68,883.12 L1314.75,882.21 L1313.75,881.80 L1313.17,882.49 L1312.01,881.33 L1312.70,880.75 L1312.29,879.75 L1311.38,879.82 L1311.38,878.18 L1312.29,878.25 L1312.70,877.25 L1312.01,876.67 L1313.17,875.51 L1313.75,876.20 L1314.75,875.79 L1314.68,874.88 L1316.32,874.88 L1316.25,875.79 L1317.25,876.20 L1317.83,875.51 L1318.99,876.67 L1318.30,877.25 Z M1316.90,879.00 A1.4,1.4 0 1 0 1314.10,879.00 A1.4,1.4 0 1 0 1316.90,879.00 Z" fill="#4a4a4a" fill-rule="evenodd"/></svg><div class="t" style="left:87.90px;top:917.81px;font-size:19.6px;line-height:19.6px;font-weight:normal;font-style:normal;color:#555555;letter-spacing:0.09px;-webkit-text-stroke:0.15px #505050;">Throughput Total</div><div class="t" style="right:1011.50px;top:917.22px;font-size:20.3px;line-height:20.3px;font-weight:normal;color:#555555;text-align:right;-webkit-text-stroke:0.15px #505050;">3</div><div class="t" style="right:877.40px;top:917.22px;font-size:20.3px;line-height:20.3px;font-weight:normal;color:#555555;text-align:right;-webkit-text-stroke:0.15px #505050;letter-spacing:-0.55px;">1.29 MB</div><div class="t" style="right:742.00px;top:917.22px;font-size:20.3px;line-height:20.3px;font-weight:normal;color:#555555;text-align:right;-webkit-text-stroke:0.15px #505050;">0.18 Mbit/s</div><div class="t" style="right:480.20px;top:917.22px;font-size:20.3px;line-height:20.3px;font-weight:normal;color:#555555;text-align:right;-webkit-text-stroke:0.15px #505050;">0.14 Mbit/s</div><div class="t" style="right:218.30px;top:917.22px;font-size:20.3px;line-height:20.3px;font-weight:normal;color:#555555;text-align:right;-webkit-text-stroke:0.15px #505050;">0.22 Mbit/s</div><div class="abs" style="left:73px;top:944px;width:1348px;height:1px;background:#e6e6e6;"></div><svg class="abs" style="left:0;top:0" width="1" height="1"><path d="M1329.94,920.35 L1331.14,920.31 L1331.14,922.09 L1329.94,922.05 L1329.62,923.23 L1330.68,923.80 L1329.79,925.34 L1328.77,924.70 L1327.90,925.57 L1328.54,926.59 L1327.00,927.48 L1326.43,926.42 L1325.25,926.74 L1325.29,927.94 L1323.51,927.94 L1323.55,926.74 L1322.37,926.42 L1321.80,927.48 L1320.26,926.59 L1320.90,925.57 L1320.03,924.70 L1319.01,925.34 L1318.12,923.80 L1319.18,923.23 L1318.86,922.05 L1317.66,922.09 L1317.66,920.31 L1318.86,920.35 L1319.18,919.17 L1318.12,918.60 L1319.01,917.06 L1320.03,917.70 L1320.90,916.83 L1320.26,915.81 L1321.80,914.92 L1322.37,915.98 L1323.55,915.66 L1323.51,914.46 L1325.29,914.46 L1325.25,915.66 L1326.43,915.98 L1327.00,914.92 L1328.54,915.81 L1327.90,916.83 L1328.77,917.70 L1329.79,917.06 L1330.68,918.60 L1329.62,919.17 Z M1327.00,921.20 A2.6,2.6 0 1 0 1321.80,921.20 A2.6,2.6 0 1 0 1327.00,921.20 Z" fill="#4a4a4a" fill-rule="evenodd"/><path d="M1318.71,929.25 L1319.62,929.18 L1319.62,930.82 L1318.71,930.75 L1318.30,931.75 L1318.99,932.33 L1317.83,933.49 L1317.25,932.80 L1316.25,933.21 L1316.32,934.12 L1314.68,934.12 L1314.75,933.21 L1313.75,932.80 L1313.17,933.49 L1312.01,932.33 L1312.70,931.75 L1312.29,930.75 L1311.38,930.82 L1311.38,929.18 L1312.29,929.25 L1312.70,928.25 L1312.01,927.67 L1313.17,926.51 L1313.75,927.20 L1314.75,926.79 L1314.68,925.88 L1316.32,925.88 L1316.25,926.79 L1317.25,927.20 L1317.83,926.51 L1318.99,927.67 L1318.30,928.25 Z M1316.90,930.00 A1.4,1.4 0 1 0 1314.10,930.00 A1.4,1.4 0 1 0 1316.90,930.00 Z" fill="#4a4a4a" fill-rule="evenodd"/></svg><div class="t" style="left:87.90px;top:968.81px;font-size:19.6px;line-height:19.6px;font-weight:normal;font-style:normal;color:#555555;letter-spacing:0px;-webkit-text-stroke:0.15px #505050;">Throughput Write</div><div class="t" style="right:1011.50px;top:968.22px;font-size:20.3px;line-height:20.3px;font-weight:normal;color:#555555;text-align:right;-webkit-text-stroke:0.15px #505050;">2</div><div class="t" style="right:877.40px;top:968.22px;font-size:20.3px;line-height:20.3px;font-weight:normal;color:#555555;text-align:right;-webkit-text-stroke:0.15px #505050;letter-spacing:-0.55px;">0.65 MB</div><div class="t" style="right:742.00px;top:968.22px;font-size:20.3px;line-height:20.3px;font-weight:normal;color:#555555;text-align:right;-webkit-text-stroke:0.15px #505050;">0.09 Mbit/s</div><div class="t" style="right:480.20px;top:968.22px;font-size:20.3px;line-height:20.3px;font-weight:normal;color:#555555;text-align:right;-webkit-text-stroke:0.15px #505050;">0.07 Mbit/s</div><div class="t" style="right:218.30px;top:968.22px;font-size:20.3px;line-height:20.3px;font-weight:normal;color:#555555;text-align:right;-webkit-text-stroke:0.15px #505050;">0.11 Mbit/s</div><div class="abs" style="left:73px;top:995px;width:1348px;height:1px;background:#e6e6e6;"></div><svg class="abs" style="left:0;top:0" width="1" height="1"><path d="M1329.94,971.35 L1331.14,971.31 L1331.14,973.09 L1329.94,973.05 L1329.62,974.23 L1330.68,974.80 L1329.79,976.34 L1328.77,975.70 L1327.90,976.57 L1328.54,977.59 L1327.00,978.48 L1326.43,977.42 L1325.25,977.74 L1325.29,978.94 L1323.51,978.94 L1323.55,977.74 L1322.37,977.42 L1321.80,978.48 L1320.26,977.59 L1320.90,976.57 L1320.03,975.70 L1319.01,976.34 L1318.12,974.80 L1319.18,974.23 L1318.86,973.05 L1317.66,973.09 L1317.66,971.31 L1318.86,971.35 L1319.18,970.17 L1318.12,969.60 L1319.01,968.06 L1320.03,968.70 L1320.90,967.83 L1320.26,966.81 L1321.80,965.92 L1322.37,966.98 L1323.55,966.66 L1323.51,965.46 L1325.29,965.46 L1325.25,966.66 L1326.43,966.98 L1327.00,965.92 L1328.54,966.81 L1327.90,967.83 L1328.77,968.70 L1329.79,968.06 L1330.68,969.60 L1329.62,970.17 Z M1327.00,972.20 A2.6,2.6 0 1 0 1321.80,972.20 A2.6,2.6 0 1 0 1327.00,972.20 Z" fill="#4a4a4a" fill-rule="evenodd"/><path d="M1318.71,980.25 L1319.62,980.18 L1319.62,981.82 L1318.71,981.75 L1318.30,982.75 L1318.99,983.33 L1317.83,984.49 L1317.25,983.80 L1316.25,984.21 L1316.32,985.12 L1314.68,985.12 L1314.75,984.21 L1313.75,983.80 L1313.17,984.49 L1312.01,983.33 L1312.70,982.75 L1312.29,981.75 L1311.38,981.82 L1311.38,980.18 L1312.29,980.25 L1312.70,979.25 L1312.01,978.67 L1313.17,977.51 L1313.75,978.20 L1314.75,977.79 L1314.68,976.88 L1316.32,976.88 L1316.25,977.79 L1317.25,978.20 L1317.83,977.51 L1318.99,978.67 L1318.30,979.25 Z M1316.90,981.00 A1.4,1.4 0 1 0 1314.10,981.00 A1.4,1.4 0 1 0 1316.90,981.00 Z" fill="#4a4a4a" fill-rule="evenodd"/></svg><div class="t" style="left:87.90px;top:1019.81px;font-size:19.6px;line-height:19.6px;font-weight:normal;font-style:normal;color:#555555;letter-spacing:-0.02px;-webkit-text-stroke:0.15px #505050;">Transmit Errors</div><div class="t" style="right:1011.50px;top:1019.22px;font-size:20.3px;line-height:20.3px;font-weight:normal;color:#555555;text-align:right;-webkit-text-stroke:0.15px #505050;">4</div><div class="t" style="right:876.50px;top:1019.22px;font-size:20.3px;line-height:20.3px;font-weight:normal;color:#555555;text-align:right;-webkit-text-stroke:0.15px #505050;">0 #</div><div class="t" style="right:480.20px;top:1019.22px;font-size:20.3px;line-height:20.3px;font-weight:normal;color:#555555;text-align:right;-webkit-text-stroke:0.15px #505050;">0 #</div><div class="t" style="right:218.30px;top:1019.22px;font-size:20.3px;line-height:20.3px;font-weight:normal;color:#555555;text-align:right;-webkit-text-stroke:0.15px #505050;">0 #</div><div class="abs" style="left:73px;top:1046px;width:1348px;height:1px;background:#e6e6e6;"></div><svg class="abs" style="left:0;top:0" width="1" height="1"><path d="M1329.94,1022.35 L1331.14,1022.31 L1331.14,1024.09 L1329.94,1024.05 L1329.62,1025.23 L1330.68,1025.80 L1329.79,1027.34 L1328.77,1026.70 L1327.90,1027.57 L1328.54,1028.59 L1327.00,1029.48 L1326.43,1028.42 L1325.25,1028.74 L1325.29,1029.94 L1323.51,1029.94 L1323.55,1028.74 L1322.37,1028.42 L1321.80,1029.48 L1320.26,1028.59 L1320.90,1027.57 L1320.03,1026.70 L1319.01,1027.34 L1318.12,1025.80 L1319.18,1025.23 L1318.86,1024.05 L1317.66,1024.09 L1317.66,1022.31 L1318.86,1022.35 L1319.18,1021.17 L1318.12,1020.60 L1319.01,1019.06 L1320.03,1019.70 L1320.90,1018.83 L1320.26,1017.81 L1321.80,1016.92 L1322.37,1017.98 L1323.55,1017.66 L1323.51,1016.46 L1325.29,1016.46 L1325.25,1017.66 L1326.43,1017.98 L1327.00,1016.92 L1328.54,1017.81 L1327.90,1018.83 L1328.77,1019.70 L1329.79,1019.06 L1330.68,1020.60 L1329.62,1021.17 Z M1327.00,1023.20 A2.6,2.6 0 1 0 1321.80,1023.20 A2.6,2.6 0 1 0 1327.00,1023.20 Z" fill="#4a4a4a" fill-rule="evenodd"/><path d="M1318.71,1031.25 L1319.62,1031.18 L1319.62,1032.82 L1318.71,1032.75 L1318.30,1033.75 L1318.99,1034.33 L1317.83,1035.49 L1317.25,1034.80 L1316.25,1035.21 L1316.32,1036.12 L1314.68,1036.12 L1314.75,1035.21 L1313.75,1034.80 L1313.17,1035.49 L1312.01,1034.33 L1312.70,1033.75 L1312.29,1032.75 L1311.38,1032.82 L1311.38,1031.18 L1312.29,1031.25 L1312.70,1030.25 L1312.01,1029.67 L1313.17,1028.51 L1313.75,1029.20 L1314.75,1028.79 L1314.68,1027.88 L1316.32,1027.88 L1316.25,1028.79 L1317.25,1029.20 L1317.83,1028.51 L1318.99,1029.67 L1318.30,1030.25 Z M1316.90,1032.00 A1.4,1.4 0 1 0 1314.10,1032.00 A1.4,1.4 0 1 0 1316.90,1032.00 Z" fill="#4a4a4a" fill-rule="evenodd"/></svg></body></html>
